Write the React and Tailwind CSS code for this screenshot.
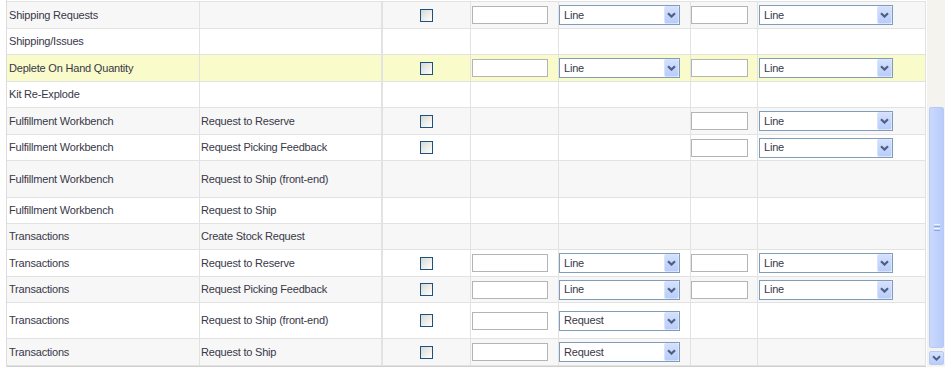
import React from "react";

const rows = [
  { a: "Shipping Requests", b: "", cb: true, in1: true, sel1: "Line", in2: true, sel2: "Line", h: "h-[27px]" },
  { a: "Shipping/Issues", b: "", h: "h-[26px]" },
  { a: "Deplete On Hand Quantity", b: "", cb: true, in1: true, sel1: "Line", in2: true, sel2: "Line", hl: true, h: "h-[27px]" },
  { a: "Kit Re-Explode", b: "", h: "h-[26px]" },
  { a: "Fulfillment Workbench", b: "Request to Reserve", cb: true, in2: true, sel2: "Line", h: "h-[27px]" },
  { a: "Fulfillment Workbench", b: "Request Picking Feedback", cb: true, in2: true, sel2: "Line", h: "h-[26px]" },
  { a: "Fulfillment Workbench", b: "Request to Ship (front-end)", h: "h-[37px]" },
  { a: "Fulfillment Workbench", b: "Request to Ship", h: "h-[26px]" },
  { a: "Transactions", b: "Create Stock Request", h: "h-[26px]" },
  { a: "Transactions", b: "Request to Reserve", cb: true, in1: true, sel1: "Line", in2: true, sel2: "Line", h: "h-[27px]" },
  { a: "Transactions", b: "Request Picking Feedback", cb: true, in1: true, sel1: "Line", in2: true, sel2: "Line", h: "h-[26px]" },
  { a: "Transactions", b: "Request to Ship (front-end)", cb: true, in1: true, sel1: "Request", h: "h-[36px]" },
  { a: "Transactions", b: "Request to Ship", cb: true, in1: true, sel1: "Request", h: "h-[27px]" },
];

function Chevron() {
  return (
    <svg width="9" height="6" viewBox="0 0 9 6">
      <path d="M1 1.2 L4.5 4.6 L8 1.2" fill="none" stroke="#4d6185" strokeWidth="2.2" />
    </svg>
  );
}

function Select({ value, width }) {
  return (
    <div className={`flex h-[20px] items-center justify-between border border-[#7f9db9] bg-white ${width}`}>
      <span className="pl-[4px] text-[11px] tracking-[-0.2px] text-[#383848]">{value}</span>
      <div className="flex h-[18px] w-[15px] items-center justify-center rounded-[2px] border border-[#d9e3fd] bg-gradient-to-b from-[#d4e0fd] to-[#b9cdfa]">
        <Chevron />
      </div>
    </div>
  );
}

function TextBox({ width }) {
  return <div className={`h-[18px] border border-[#b4b4b4] bg-white ${width}`} />;
}

function CheckBox() {
  return <div className="h-[13px] w-[13px] border border-[#1c5180] bg-gradient-to-br from-[#d8d8d2] to-white" />;
}

function Cell({ children, className = "" }) {
  return <div className={`flex items-center border-r border-b border-[#e2e2e2] ${className}`}>{children}</div>;
}

export default function App() {
  return (
    <div className="flex h-[371px] w-[949px] bg-white font-['Liberation_Sans',Arial,sans-serif] text-[11px] text-[#383848]">
      <div className="w-[6px]" />
      <div className="h-[367px] w-[920px] border-l border-[#dcdcdc] pt-[1px]">
        <div className="border-t border-b border-[#e2e2e2] border-b-[#cfcfcf]">
          {rows.map((r, i) => {
            const bg = r.hl ? "bg-[#f9fbca]" : i % 2 === 0 ? "bg-[#f7f7f7]" : "bg-white";
            return (
              <div
                key={i}
                className={`grid grid-cols-[193px_182px_89px_88px_132px_67px_168px] ${r.h} ${bg}`}
              >
                <Cell className="pl-[2px] tracking-[-0.2px]">{r.a}</Cell>
                <Cell className="pl-[1px] tracking-[-0.2px]">{r.b}</Cell>
                <Cell className="justify-center border-l">{r.cb && <CheckBox />}</Cell>
                <Cell className="pl-[1px]">{r.in1 && <TextBox width="w-[76px]" />}</Cell>
                <Cell>{r.sel1 && <Select value={r.sel1} width="w-[121px]" />}</Cell>
                <Cell>{r.in2 && <TextBox width="w-[57px]" />}</Cell>
                <Cell className="pl-[1px]">{r.sel2 && <Select value={r.sel2} width="w-[134px]" />}</Cell>
              </div>
            );
          })}
        </div>
      </div>
      <div className="flex h-[367px] w-[19px] flex-col border-l border-white bg-[#f4f3ee] pl-[2px] pr-[2px]">
        <div className="h-[107px]" />
        <div className="flex h-[241px] w-[15px] items-center justify-center rounded-[2px] border border-[#b6caf6] bg-gradient-to-r from-[#cbd9fd] to-[#b8cbfa]">
          <div className="flex flex-col gap-[1px]">
            <div className="h-[1px] w-[6px] bg-[#eef3fe]" />
            <div className="h-[1px] w-[6px] bg-[#8ca5e0]" />
            <div className="h-[1px] w-[6px] bg-[#eef3fe]" />
            <div className="h-[1px] w-[6px] bg-[#8ca5e0]" />
          </div>
        </div>
        <div className="h-[3px]" />
        <div className="flex h-[14px] w-[15px] items-center justify-center rounded-[2px] border border-[#b6caf6] bg-gradient-to-b from-[#d4e0fd] to-[#b9cdfa]">
          <svg width="9" height="6" viewBox="0 0 9 6">
            <path d="M1 1.2 L4.5 4.6 L8 1.2" fill="none" stroke="#4d6185" strokeWidth="2" />
          </svg>
        </div>
      </div>
    </div>
  );
}
